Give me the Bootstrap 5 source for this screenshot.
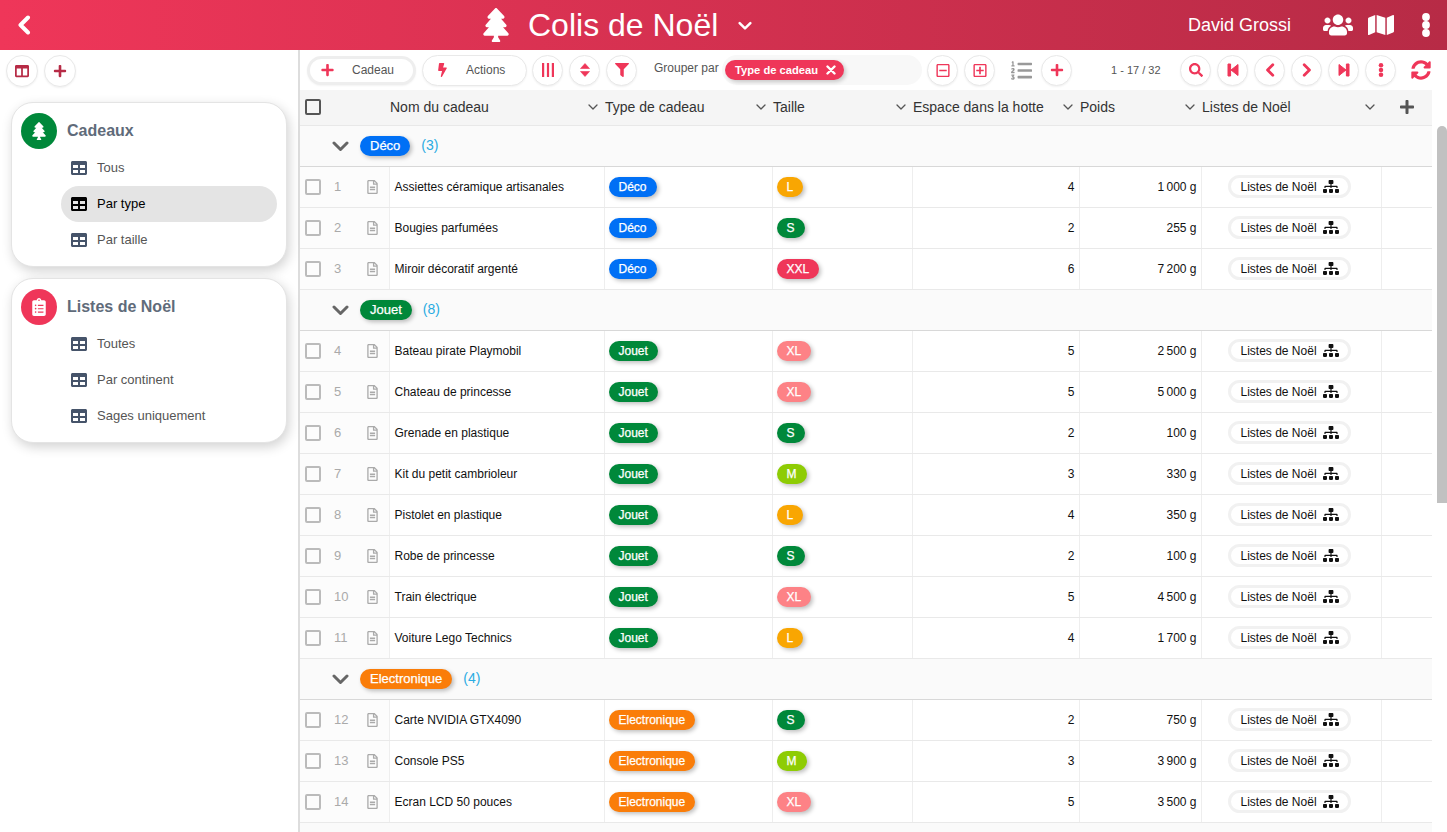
<!DOCTYPE html>
<html lang="fr">
<head>
  <meta charset="UTF-8" />
  <meta name="viewport" content="width=device-width, initial-scale=1.0"/>
  <title>Colis de Noël</title>

  <link rel="stylesheet" href="https://cdn.jsdelivr.net/npm/bootstrap@5.3.0/dist/css/bootstrap.min.css" />
  <style>
    html, body { height: 100%; overflow: hidden; }
    body { font-family: "Liberation Sans", Arial, sans-serif; background: #fff; color: #111; }
    .ic { display: block; fill: currentColor; }
    .app-body { height: calc(100vh - 50px); overflow: hidden; }

    /* header */
    .top-bar { height: 50px; color: #fff; background: linear-gradient(90deg, #ef3659, #b72b46); }
    .back-btn { margin-left: 17px; width: 14px; height: 20px; }
    .title-group { margin-left: 452px; }
    .title-tree { width: 26px; height: 34px; }
    .title-text { font-size: 32px; line-height: 50px; margin: 0 0 0 19px; font-weight: 400; }
    .title-caret { width: 14px; height: 9px; margin-left: 20px; }
    .user-name { font-size: 18px; }
    .i-users { width: 30px; height: 24px; margin-left: 32px; }
    .i-map { width: 26px; height: 24px; margin-left: 15px; }
    .i-dots { width: 10px; height: 24px; margin: 0 16px 0 27px; }

    /* sidebar */
    .side-pane { width: 300px; border-right: 2px solid #ddd; flex: none; }
    .side-tools { padding: 5px 6px 0; gap: 6px; }
    .round-btn { width: 32px; height: 32px; padding: 0; flex: none; border: 1px solid #e9e9e9; border-radius: 50%; background: #fff; color: #ef3659; display: flex; align-items: center; justify-content: center; box-shadow: 0 1px 2px rgba(0,0,0,.06); }
    .round-btn .ic { width: 14px; height: 14px; }
    .side-tools .round-btn { color: #b72b46; }
    .menu-box { margin: 0 11px 11px; height: 165px; padding: 10px 9px 0; background: #fff; border: 1px solid #e4e4e4; border-radius: 22px; box-shadow: 2px 4px 12px rgba(0,0,0,.18); }
    .side-tools + .menu-box { margin-top: 15px; }
    .menu-head { margin-bottom: 1px; }
    .menu-avatar { width: 36px; height: 36px; border-radius: 50%; color: #fff; flex: none; display: flex; align-items: center; justify-content: center; }
    .menu-avatar .ic { width: 14px; height: 18px; }
    .menu-title { font-size: 16px; font-weight: 700; color: #5f6b7a; margin-left: 10px; }
    .menu-item { display: flex; align-items: center; height: 36px; margin: 0 0 0 40px; padding-left: 10px; width: 216px; border-radius: 18px; font-size: 13px; color: #555; text-decoration: none; }
    .menu-item .ic { width: 16px; height: 16px; margin-right: 10px; color: #46546a; }
    .menu-item.on { background: #e4e4e4; color: #000; }
    .menu-item.on .ic { color: #000; }
    .bg-tree { background: #00883a; }
    .bg-list { background: #ef3659; }

    /* toolbar */
    .tool-bar { height: 40px; padding-left: 7px; font-size: 12px; color: #555; }
    .tool-bar .round-btn { width: 31px; height: 31px; }
    .pill-btn { height: 31px; border: 1px solid #e9e9e9; border-radius: 16px; background: #fff; color: #555; font-size: 12px; display: flex; align-items: center; padding: 0; box-shadow: 0 1px 2px rgba(0,0,0,.05); }
    .pill-btn .ic { color: #ef3659; }
    .btn-add { width: 109px; height: 29px; border: 3px solid #eee; }
    .btn-add .ic { width: 13px; height: 14px; margin: 0 18px 0 11px; }
    .btn-act { width: 105px; margin-left: 6px; }
    .btn-act .ic { width: 9px; height: 14px; margin: 0 19px 0 15px; }
    .m-5p { margin-left: 5px; }
    .m-6p { margin-left: 6px; }
    .m-9p { margin-left: 9px; }
    .group-label { margin-left: 17px; width: 68px; margin-top: -4px; }
    .group-box { width: 200px; height: 30px; background: #f8f8f8; border-radius: 15px; padding-left: 3px; }
    .group-chip { display: inline-flex; align-items: center; justify-content: space-between; width: 119px; height: 20px; padding: 0 8px 0 10px; border-radius: 10px; background: #ef3659; color: #fff; font-size: 11.2px; font-weight: 700; box-shadow: 2px 2px 4px rgba(0,0,0,.2); }
    .group-chip .ic { width: 10px; height: 10px; }
    .tool-bar .i-list { width: 21px; height: 21px; margin-left: 16px; color: #999; }
    .pager-text { margin-left: 39px; width: 69px; font-size: 11px; }
    .i-sync { width: 20px; height: 20px; margin-left: 15px; color: #ef3659; }
    .tool-bar .round-btn .ic-sq { width: 14px; height: 15px; }

    /* table */
    .table-area { height: calc(100% - 40px); }
    .table-wrap { width: 1132px; flex: none; background: #fafafa; overflow: hidden; }
    .scroll-track { width: 10px; margin-left: 5px; padding-top: 36px; flex: none; }
    .scroll-thumb { height: 377px; background: #c1c1c1; border-radius: 5px 5px 0 0; }
    .gift-table { table-layout: fixed; width: 1132px; margin: 0; font-size: 12px; }
    .gift-table th, .gift-table td { padding: 0 4px; vertical-align: middle; box-shadow: none; }
    .gift-table thead th { height: 35px; background: #f5f5f5; color: #333; font-size: 14px; font-weight: 400; border-bottom: 1px solid #e8e8e8; padding: 0 6px 0 1px; }
    .gift-table tbody td { height: 41px; background: #fff; border-bottom: 1px solid #e9e9e9; border-left: 1px solid #eee; color: #111; }
    .gift-table tbody td.td-start { border-left: 0; background: #fcfcfc; padding: 0 0 0 5px; }
    .gift-table tbody td.td-group { height: 41px; background: #fafafa; border-left: 0; border-bottom: 1px solid #d8d8d8; padding: 0 0 0 32px; }
    .head-caret { width: 10px; height: 6px; color: #555; flex: none; }
    .head-check { width: 16px; height: 16px; border: 2px solid #555; border-radius: 2px; margin-left: 4px; }
    .row-check { width: 16px; height: 16px; border: 2px solid #bbb; border-radius: 2px; flex: none; }
    .row-num { width: 46px; padding-left: 13px; color: #aaa; font-size: 13px; }
    .row-doc { width: 11px; height: 14px; color: #aaa; }
    .gift-table tbody td.name-cell { padding-left: 5px; }
    .head-plus { width: 14px; height: 16px; color: #555; margin-left: 18px; }
    .tag-pill { display: inline-block; height: 20px; line-height: 20px; padding: 0 10px; border-radius: 10px; color: #fff; font-size: 12px; -webkit-text-stroke: .25px #fff; box-shadow: 2px 2px 4px rgba(0,0,0,.25); }
    .td-group .tag-pill { font-size: 13px; padding: 0 10px; }
    .group-caret { width: 17px; height: 10px; color: #666; margin-right: 11px; }
    .group-count { margin-left: 11px; font-size: 14px; color: #29abe2; }
    .link-chip { display: inline-flex; align-items: center; height: 23px; width: 123px; margin-left: 22px; padding-left: 10px; border: 3px solid #f1f1f1; border-radius: 12px; background: #fff; font-size: 12px; color: #111; }
    .link-chip .ic { width: 16px; height: 13px; margin-left: 6px; }
    .c-deco { background: #0070f5; }
    .c-jouet, .c-s { background: #00883a; }
    .c-elec { background: #fa7d09; }
    .c-l { background: #f9a602; }
    .c-xxl { background: #ef3659; }
    .c-xl { background: #fd8286; }
    .c-m { background: #8ecc04; }
  </style>
</head>
<body>
  <!-- Icons -->
  <svg width="0" height="0" class="d-none">
    <symbol id="i-plus" viewBox="0 0 448 512"><path d="M416 208H272V64c0-17.67-14.33-32-32-32h-32c-17.67 0-32 14.33-32 32v144H32c-17.67 0-32 14.33-32 32v32c0 17.67 14.33 32 32 32h144v144c0 17.67 14.33 32 32 32h32c17.67 0 32-14.33 32-32V304h144c17.67 0 32-14.33 32-32v-32c0-17.67-14.33-32-32-32z"/></symbol>
    <symbol id="i-tree" viewBox="0 0 384 512"><path d="M378.31 378.49L298.42 288h30.63c9.01 0 16.98-5 20.78-13.06 3.8-8.04 2.55-17.26-3.28-24.05L268.42 160h28.89c9.1 0 17.3-5.35 20.86-13.61 3.52-8.13 1.86-17.59-4.24-24.08L203.66 4.83c-6.03-6.45-17.28-6.45-23.32 0L70.06 122.31c-6.1 6.49-7.75 15.95-4.24 24.08C69.38 154.65 77.59 160 86.69 160h28.89l-78.14 90.91c-5.81 6.78-7.06 15.99-3.27 24.04C37.97 283 45.93 288 54.95 288h30.63L5.69 378.49c-6 6.79-7.36 16.09-3.56 24.26 3.75 8.05 12 13.25 21.01 13.25H160v24.45l-30.29 48.4c-5.32 10.64 2.42 23.16 14.31 23.16h95.96c11.89 0 19.63-12.52 14.31-23.16L224 440.45V416h136.86c9.01 0 17.26-5.2 21.01-13.25 3.8-8.17 2.44-17.47-3.56-24.26z"/></symbol>
    <symbol id="i-users" viewBox="0 0 640 512"><path d="M96 224c35.3 0 64-28.7 64-64s-28.7-64-64-64-64 28.7-64 64 28.7 64 64 64zm448 0c35.3 0 64-28.7 64-64s-28.7-64-64-64-64 28.7-64 64 28.7 64 64 64zm32 32h-64c-17.6 0-33.5 7.1-45.1 18.6 40.3 22.1 68.9 62 75.1 109.4h66c17.7 0 32-14.3 32-32v-32c0-35.3-28.7-64-64-64zm-256 0c61.9 0 112-50.1 112-112S381.9 32 320 32 208 82.1 208 144s50.1 112 112 112zm76.8 32h-8.3c-20.8 10-43.9 16-68.5 16s-47.6-6-68.5-16h-8.3C179.6 288 128 339.6 128 403.2V432c0 26.5 21.5 48 48 48h288c26.5 0 48-21.5 48-48v-28.8c0-63.6-51.6-115.2-115.2-115.2zm-223.7-13.4C161.5 263.1 145.6 256 128 256H64c-35.3 0-64 28.7-64 64v32c0 17.7 14.3 32 32 32h65.9c6.3-47.4 34.9-87.3 75.2-109.4z"/></symbol>
    <symbol id="i-map" viewBox="0 0 576 512"><path d="M0 117.66v346.32c0 11.32 11.43 19.06 21.94 14.86L160 416V32L20.12 87.95A32.006 32.006 0 0 0 0 117.66zM192 416l192 64V96L192 32v384zM554.06 33.16L416 96v384l139.88-55.95A31.996 31.996 0 0 0 576 394.34V48.02c0-11.32-11.43-19.06-21.94-14.86z"/></symbol>
    <symbol id="i-dots" viewBox="0 0 10 24"><circle cx="5" cy="4" r="3.9"/><circle cx="5" cy="12" r="3.9"/><circle cx="5" cy="20" r="3.9"/></symbol>
    <symbol id="i-table" viewBox="0 0 512 512"><path d="M464 32H48C21.49 32 0 53.49 0 80v352c0 26.51 21.49 48 48 48h416c26.51 0 48-21.49 48-48V80c0-26.51-21.49-48-48-48zM224 416H64v-96h160v96zm0-160H64v-96h160v96zm224 160H288v-96h160v96zm0-160H288v-96h160v96z"/></symbol>
    <symbol id="i-columns" viewBox="0 0 512 512"><path d="M464 32H48C21.49 32 0 53.49 0 80v352c0 26.51 21.49 48 48 48h416c26.51 0 48-21.49 48-48V80c0-26.51-21.49-48-48-48zM224 416H64V160h160v256zm224 0H288V160h160v256z"/></symbol>
    <symbol id="i-clip" viewBox="0 0 384 512"><path d="M336 64h-80c0-35.3-28.7-64-64-64s-64 28.7-64 64H48C21.5 64 0 85.5 0 112v352c0 26.5 21.5 48 48 48h288c26.5 0 48-21.5 48-48V112c0-26.5-21.5-48-48-48zM96 424c-13.3 0-24-10.7-24-24s10.7-24 24-24 24 10.7 24 24-10.7 24-24 24zm0-96c-13.3 0-24-10.7-24-24s10.7-24 24-24 24 10.7 24 24-10.7 24-24 24zm0-96c-13.3 0-24-10.7-24-24s10.7-24 24-24 24 10.7 24 24-10.7 24-24 24zm96-192c13.3 0 24 10.7 24 24s-10.7 24-24 24-24-10.7-24-24 10.7-24 24-24zm128 368c0 4.4-3.6 8-8 8H168c-4.4 0-8-3.6-8-8v-16c0-4.4 3.6-8 8-8h144c4.4 0 8 3.6 8 8v16zm0-96c0 4.4-3.6 8-8 8H168c-4.4 0-8-3.6-8-8v-16c0-4.4 3.6-8 8-8h144c4.4 0 8 3.6 8 8v16zm0-96c0 4.4-3.6 8-8 8H168c-4.4 0-8-3.6-8-8v-16c0-4.4 3.6-8 8-8h144c4.4 0 8 3.6 8 8v16z"/></symbol>
    <symbol id="i-sitemap" viewBox="0 0 640 512"><path d="M128 352H32c-17.67 0-32 14.33-32 32v96c0 17.67 14.33 32 32 32h96c17.67 0 32-14.33 32-32v-96c0-17.67-14.33-32-32-32zm-24-80h192v48h48v-48h192v48h48v-57.59c0-21.17-17.23-38.41-38.41-38.41H344v-64h40c17.67 0 32-14.33 32-32V32c0-17.67-14.33-32-32-32H256c-17.67 0-32 14.33-32 32v96c0 17.67 14.33 32 32 32h40v64H94.41C73.23 224 56 241.23 56 262.41V320h48v-48zm264 80h-96c-17.67 0-32 14.33-32 32v96c0 17.67 14.33 32 32 32h96c17.67 0 32-14.33 32-32v-96c0-17.67-14.33-32-32-32zm240 0h-96c-17.67 0-32 14.33-32 32v96c0 17.67 14.33 32 32 32h96c17.67 0 32-14.33 32-32v-96c0-17.67-14.33-32-32-32z"/></symbol>
    <symbol id="i-file" viewBox="0 0 384 512"><path d="M288 248v28c0 6.6-5.4 12-12 12H108c-6.6 0-12-5.4-12-12v-28c0-6.6 5.4-12 12-12h168c6.6 0 12 5.4 12 12zm-12 72H108c-6.6 0-12 5.4-12 12v28c0 6.6 5.4 12 12 12h168c6.6 0 12-5.4 12-12v-28c0-6.6-5.4-12-12-12zm108-188.1V464c0 26.5-21.5 48-48 48H48c-26.5 0-48-21.5-48-48V48C0 21.5 21.5 0 48 0h204.1C264.8 0 277 5.1 286 14.1L369.9 98c9 8.9 14.1 21.2 14.1 33.9zm-128-80V128h76.1L256 51.9zM336 464V176H232c-13.3 0-24-10.7-24-24V48H48v416h288z"/></symbol>
    <symbol id="i-bolt" viewBox="0 0 320 512"><path d="M296 160H180.6l42.6-129.8C227.2 15 215.7 0 200 0H56C44 0 33.8 8.9 32.2 20.8l-32 240C-1.7 275.2 9.5 288 24 288h118.7L96.6 482.5c-3.6 15.2 8 29.5 23.3 29.5 8.4 0 16.4-4.4 20.8-12l176-304c9.3-15.9-2.2-36-20.7-36z"/></symbol>
    <symbol id="i-filter" viewBox="0 0 512 512"><path d="M487.976 0H24.028C2.71 0-8.047 25.866 7.058 40.971L192 225.941V432c0 7.831 3.821 15.17 10.237 19.662l80 55.98C298.02 518.69 320 507.493 320 487.98V225.941l184.947-184.97C520.021 25.896 509.338 0 487.976 0z"/></symbol>
    <symbol id="i-search" viewBox="0 0 512 512"><path d="M505 442.7L405.3 343c-4.5-4.5-10.6-7-17-7H372c27.6-35.3 44-79.7 44-128C416 93.1 322.9 0 208 0S0 93.1 0 208s93.1 208 208 208c48.3 0 92.7-16.4 128-44v16.3c0 6.4 2.5 12.5 7 17l99.7 99.7c9.4 9.4 24.6 9.4 33.9 0l28.3-28.3c9.4-9.4 9.4-24.6.1-34zM208 336c-70.7 0-128-57.2-128-128 0-70.7 57.2-128 128-128 70.7 0 128 57.2 128 128 0 70.7-57.2 128-128 128z"/></symbol>
    <symbol id="i-sync" viewBox="0 0 512 512"><path d="M370.72 133.28C339.458 104.008 298.888 87.962 255.848 88c-77.458.068-144.328 53.178-162.791 126.85-1.344 5.363-6.122 9.15-11.651 9.15H24.103c-7.498 0-13.194-6.807-11.807-14.176C33.933 94.924 134.813 8 256 8c66.448 0 126.791 26.136 171.315 68.685L463.03 40.97C478.149 25.851 504 36.559 504 57.941V192c0 13.255-10.745 24-24 24H345.941c-21.382 0-32.09-25.851-16.971-40.971l41.75-41.749zM32 296h134.059c21.382 0 32.09 25.851 16.971 40.971l-41.75 41.75c31.262 29.273 71.835 45.319 114.876 45.28 77.418-.07 144.315-53.144 162.787-126.849 1.344-5.363 6.122-9.15 11.651-9.15h57.304c7.498 0 13.194 6.807 11.807 14.176C478.067 417.076 377.187 504 256 504c-66.448 0-126.791-26.136-171.315-68.685L48.97 471.03C33.851 486.149 8 475.441 8 454.059V320c0-13.255 10.745-24 24-24z"/></symbol>
    <symbol id="i-minus-sq" viewBox="0 0 448 512"><path d="M108 284c-6.6 0-12-5.4-12-12v-32c0-6.6 5.4-12 12-12h232c6.6 0 12 5.4 12 12v32c0 6.6-5.4 12-12 12H108zM448 80v352c0 26.5-21.5 48-48 48H48c-26.5 0-48-21.5-48-48V80c0-26.5 21.5-48 48-48h352c26.5 0 48 21.5 48 48zm-48 346V86c0-3.3-2.7-6-6-6H54c-3.3 0-6 2.7-6 6v340c0 3.3 2.7 6 6 6h340c3.3 0 6-2.7 6-6z"/></symbol>
    <symbol id="i-plus-sq" viewBox="0 0 448 512"><path d="M352 240v32c0 6.6-5.4 12-12 12h-88v88c0 6.6-5.4 12-12 12h-32c-6.6 0-12-5.4-12-12v-88h-88c-6.6 0-12-5.4-12-12v-32c0-6.6 5.4-12 12-12h88v-88c0-6.6 5.4-12 12-12h32c6.6 0 12 5.4 12 12v88h88c6.6 0 12 5.4 12 12zm96-160v352c0 26.5-21.5 48-48 48H48c-26.5 0-48-21.5-48-48V80c0-26.5 21.5-48 48-48h352c26.5 0 48 21.5 48 48zm-48 346V86c0-3.3-2.7-6-6-6H54c-3.3 0-6 2.7-6 6v340c0 3.3 2.7 6 6 6h340c3.3 0 6-2.7 6-6z"/></symbol>
    <symbol id="i-list" viewBox="0 0 512 512"><path d="M496 224H176a16 16 0 0 0-16 16v32a16 16 0 0 0 16 16h320a16 16 0 0 0 16-16v-32a16 16 0 0 0-16-16zm0-160H176a16 16 0 0 0-16 16v32a16 16 0 0 0 16 16h320a16 16 0 0 0 16-16V80a16 16 0 0 0-16-16zm0 320H176a16 16 0 0 0-16 16v32a16 16 0 0 0 16 16h320a16 16 0 0 0 16-16v-32a16 16 0 0 0-16-16zM16 160h64a8 8 0 0 0 8-8v-16a8 8 0 0 0-8-8H64V40a8 8 0 0 0-8-8H32a8 8 0 0 0-7.14 4.42l-8 16A8 8 0 0 0 24 64h8v64H16a8 8 0 0 0-8 8v16a8 8 0 0 0 8 8zm-3.91 160H80a8 8 0 0 0 8-8v-16a8 8 0 0 0-8-8H41.32c3.29-10.29 48.34-18.68 48.34-56.44 0-29.06-25-39.56-44.47-39.56-21.36 0-33.8 10-40.46 18.75-4.37 5.59-3 10.84 2.8 15.37l8.58 6.88c5.61 4.56 11 2.47 16.12-2.44a13.44 13.44 0 0 1 9.46-3.84c3.33 0 9.28 1.56 9.28 8.75C51 248.19 0 257.31 0 304.59v4C0 316 5.08 320 12.09 320zM61.77 401l17.5-20.15a19.92 19.92 0 0 0 5.07-14.19v-3.31C84.34 356 80.5 352 73 352H16a8 8 0 0 0-8 8v16a8 8 0 0 0 8 8h22.83a157.41 157.41 0 0 0-11 12.31l-5.61 7c-4 5.07-5.25 10.13-2.8 14.88l1.05 1.93c3 5.76 6.29 7.88 12.25 7.88h4.73c10.33 0 15.94 2.44 15.94 9.09 0 4.72-4.2 8.22-14.36 8.22a41.54 41.54 0 0 1-15.47-3.12c-6.49-3.88-11.74-3.5-15.6 3.12l-5.59 9.31c-3.72 6.13-3.19 11.72 2.63 15.94 7.71 4.69 20.38 9.44 37 9.44 34.16 0 48.5-22.75 48.5-44.12-.03-14.38-9.12-29.76-28.73-34.88z"/></symbol>
    <symbol id="i-left" viewBox="0 0 14 20"><path d="M11 2.500 3.500 10l7.500 7.500" fill="none" stroke="currentColor" stroke-width="4" stroke-linecap="round" stroke-linejoin="round"/></symbol>
    <symbol id="i-right" viewBox="0 0 14 20"><path d="M3 2.500 10.500 10 3 17.500" fill="none" stroke="currentColor" stroke-width="4" stroke-linecap="round" stroke-linejoin="round"/></symbol>
    <symbol id="i-down" viewBox="0 0 17 10"><path d="M2 2l6.500 6.500L15 2" fill="none" stroke="currentColor" stroke-width="3" stroke-linecap="round" stroke-linejoin="round"/></symbol>
    <symbol id="i-caret" viewBox="0 0 10 6"><path d="M1 1l4 4 4-4" fill="none" stroke="currentColor" stroke-width="1.300" stroke-linecap="round" stroke-linejoin="round"/></symbol>
    <symbol id="i-x" viewBox="0 0 10 10"><path d="M1.500 1.500l7 7m0-7l-7 7" fill="none" stroke="currentColor" stroke-width="2.400" stroke-linecap="round"/></symbol>
    <symbol id="i-bars" viewBox="0 0 14 14"><path d="M1 0h2.200v14H1zM5.900 0h2.200v14H5.900zM10.800 0H13v14h-2.200z"/></symbol>
    <symbol id="i-sort" viewBox="0 0 10 14"><path d="M5 .5l4.500 5H.5zM5 13.500l4.500-5H.5z" stroke="currentColor" stroke-width=".6" stroke-linejoin="round"/></symbol>
    <symbol id="i-first" viewBox="0 0 12 14"><path d="M1 1h2.600v12H1zM11 1.500v11L4 7z" stroke="currentColor" stroke-linejoin="round"/></symbol>
    <symbol id="i-last" viewBox="0 0 12 14"><path d="M11 1H8.400v12H11zM1 1.500v11L8 7z" stroke="currentColor" stroke-linejoin="round"/></symbol>
  </svg>

  <!-- Header -->
  <header class="top-bar d-flex align-items-center">
    <svg class="ic back-btn"><use href="#i-left"/></svg>
    <div class="title-group d-flex align-items-center">
      <svg class="ic title-tree"><use href="#i-tree"/></svg>
      <h1 class="title-text">Colis de Noël</h1>
      <svg class="ic title-caret"><use href="#i-down"/></svg>
    </div>
    <div class="ms-auto d-flex align-items-center">
      <span class="user-name">David Grossi</span>
      <svg class="ic i-users"><use href="#i-users"/></svg>
      <svg class="ic i-map"><use href="#i-map"/></svg>
      <svg class="ic i-dots"><use href="#i-dots"/></svg>
    </div>
  </header>

  <div class="d-flex app-body">
    <!-- Sidebar -->
    <aside class="side-pane h-100">
      <div class="side-tools d-flex">
        <button class="round-btn"><svg class="ic"><use href="#i-columns"/></svg></button>
        <button class="round-btn"><svg class="ic"><use href="#i-plus"/></svg></button>
      </div>
      <div class="menu-box">
        <div class="menu-head d-flex align-items-center">
          <span class="menu-avatar bg-tree"><svg class="ic"><use href="#i-tree"/></svg></span>
          <span class="menu-title">Cadeaux</span>
        </div>
        <a class="menu-item" href="#"><svg class="ic"><use href="#i-table"/></svg>Tous</a>
        <a class="menu-item on" href="#"><svg class="ic"><use href="#i-table"/></svg>Par type</a>
        <a class="menu-item" href="#"><svg class="ic"><use href="#i-table"/></svg>Par taille</a>
      </div>
      <div class="menu-box">
        <div class="menu-head d-flex align-items-center">
          <span class="menu-avatar bg-list"><svg class="ic"><use href="#i-clip"/></svg></span>
          <span class="menu-title">Listes de Noël</span>
        </div>
        <a class="menu-item" href="#"><svg class="ic"><use href="#i-table"/></svg>Toutes</a>
        <a class="menu-item" href="#"><svg class="ic"><use href="#i-table"/></svg>Par continent</a>
        <a class="menu-item" href="#"><svg class="ic"><use href="#i-table"/></svg>Sages uniquement</a>
      </div>
    </aside>

    <!-- Main -->
    <main class="flex-grow-1 h-100">
      <div class="tool-bar d-flex align-items-center">
        <button class="pill-btn btn-add"><svg class="ic"><use href="#i-plus"/></svg>Cadeau</button>
        <button class="pill-btn btn-act"><svg class="ic"><use href="#i-bolt"/></svg>Actions</button>
        <button class="round-btn m-5p"><svg class="ic"><use href="#i-bars"/></svg></button>
        <button class="round-btn m-6p"><svg class="ic"><use href="#i-sort"/></svg></button>
        <button class="round-btn m-6p"><svg class="ic"><use href="#i-filter"/></svg></button>
        <span class="group-label">Grouper par</span>
        <div class="group-box d-flex align-items-center">
          <span class="group-chip">Type de cadeau <svg class="ic"><use href="#i-x"/></svg></span>
        </div>
        <button class="round-btn m-5p"><svg class="ic ic-sq"><use href="#i-minus-sq"/></svg></button>
        <button class="round-btn m-6p"><svg class="ic ic-sq"><use href="#i-plus-sq"/></svg></button>
        <svg class="ic i-list"><use href="#i-list"/></svg>
        <button class="round-btn m-9p"><svg class="ic"><use href="#i-plus"/></svg></button>
        <span class="pager-text">1 - 17 / 32</span>
        <button class="round-btn"><svg class="ic"><use href="#i-search"/></svg></button>
        <button class="round-btn m-6p"><svg class="ic"><use href="#i-first"/></svg></button>
        <button class="round-btn m-6p"><svg class="ic"><use href="#i-left"/></svg></button>
        <button class="round-btn m-6p"><svg class="ic"><use href="#i-right"/></svg></button>
        <button class="round-btn m-6p"><svg class="ic"><use href="#i-last"/></svg></button>
        <button class="round-btn m-6p"><svg class="ic"><use href="#i-dots"/></svg></button>
        <svg class="ic i-sync"><use href="#i-sync"/></svg>
      </div>

      <div class="d-flex table-area">
        <div class="table-wrap">
          <table class="table gift-table">
            <colgroup>
              <col style="width:89px"><col style="width:215px"><col style="width:168px"><col style="width:140px"><col style="width:167px"><col style="width:122px"><col style="width:180px"><col style="width:51px">
            </colgroup>
            <thead>
              <tr>
                <th><div class="head-check"></div></th>
                <th><div class="d-flex justify-content-between align-items-center">Nom du cadeau<svg class="ic head-caret"><use href="#i-caret"/></svg></div></th>
                <th><div class="d-flex justify-content-between align-items-center">Type de cadeau<svg class="ic head-caret"><use href="#i-caret"/></svg></div></th>
                <th><div class="d-flex justify-content-between align-items-center">Taille<svg class="ic head-caret"><use href="#i-caret"/></svg></div></th>
                <th><div class="d-flex justify-content-between align-items-center">Espace dans la hotte<svg class="ic head-caret"><use href="#i-caret"/></svg></div></th>
                <th><div class="d-flex justify-content-between align-items-center">Poids<svg class="ic head-caret"><use href="#i-caret"/></svg></div></th>
                <th><div class="d-flex justify-content-between align-items-center">Listes de Noël<svg class="ic head-caret"><use href="#i-caret"/></svg></div></th>
                <th><svg class="ic head-plus"><use href="#i-plus"/></svg></th>
              </tr>
            </thead>
            <tbody id="giftRows"></tbody>
          </table>
        </div>
        <div class="scroll-track"><div class="scroll-thumb"></div></div>
      </div>
    </main>
  </div>

  <script>
    const groups = [
      { label: 'Déco', cls: 'c-deco', total: 3, items: [
        ['Assiettes céramique artisanales', 'L', 4, 1000],
        ['Bougies parfumées', 'S', 2, 255],
        ['Miroir décoratif argenté', 'XXL', 6, 7200]
      ]},
      { label: 'Jouet', cls: 'c-jouet', total: 8, items: [
        ['Bateau pirate Playmobil', 'XL', 5, 2500],
        ['Chateau de princesse', 'XL', 5, 5000],
        ['Grenade en plastique', 'S', 2, 100],
        ['Kit du petit cambrioleur', 'M', 3, 330],
        ['Pistolet en plastique', 'L', 4, 350],
        ['Robe de princesse', 'S', 2, 100],
        ['Train électrique', 'XL', 5, 4500],
        ['Voiture Lego Technics', 'L', 4, 1700]
      ]},
      { label: 'Electronique', cls: 'c-elec', total: 4, items: [
        ['Carte NVIDIA GTX4090', 'S', 2, 750],
        ['Console PS5', 'M', 3, 3900],
        ['Ecran LCD 50 pouces', 'XL', 5, 3500]
      ]}
    ];

    // Thousands with a narrow space, as in fr-FR
    function formatWeight(grams) {
      const head = Math.floor(grams / 1000);
      const tail = String(grams % 1000).padStart(3, '0');
      return (head ? head + '\u202f' + tail : grams) + ' g';
    }

    let rowNum = 0;
    let html = '';
    groups.forEach(group => {
      html += `<tr><td colspan="8" class="td-group"><div class="d-flex align-items-center">
        <svg class="ic group-caret"><use href="#i-down"/></svg>
        <span class="tag-pill ${group.cls}">${group.label}</span>
        <span class="group-count">(${group.total})</span>
      </div></td></tr>`;
      group.items.forEach(item => {
        rowNum++;
        html += `<tr>
          <td class="td-start"><div class="d-flex align-items-center">
            <div class="row-check"></div><span class="row-num">${rowNum}</span>
            <svg class="ic row-doc"><use href="#i-file"/></svg>
          </div></td>
          <td class="name-cell">${item[0]}</td>
          <td><span class="tag-pill ${group.cls}">${group.label}</span></td>
          <td><span class="tag-pill c-${item[1].toLowerCase()}">${item[1]}</span></td>
          <td class="text-end">${item[2]}</td>
          <td class="text-end">${formatWeight(item[3])}</td>
          <td><span class="link-chip">Listes de Noël<svg class="ic"><use href="#i-sitemap"/></svg></span></td>
          <td></td>
        </tr>`;
      });
    });
    document.getElementById('giftRows').innerHTML = html;
  </script>

  <script src="https://cdn.jsdelivr.net/npm/bootstrap@5.3.0/dist/js/bootstrap.bundle.min.js"></script>
</body>
</html>
